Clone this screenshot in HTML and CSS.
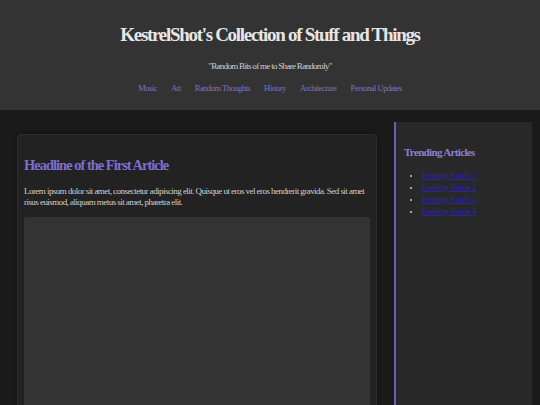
FILE: index.html
```html
<!DOCTYPE html>
<html lang="en">

<head>
    <meta charset="UTF-8">
    <meta name="viewport" content="width=device-width, initial-scale=1.0">
    <title>KestrelShot's Collection</title>
    <link rel="stylesheet" href="styles.css">
</head>

<body>
    <header>
        <h1>KestrelShot's Collection of Stuff and Things</h1>
        <p class="tagline">"Random Bits of me to Share Randomly"</p>
        <nav>
            <ul class="nav-link">
                <li><a href="#">Music</a></li>
                <li><a href="#">Art</a></li>
                <li><a href="#">Random Thoughts</a></li>
                <li><a href="#">History</a></li>
                <li><a href="#">Architecture</a></li>
                <li><a href="#">Personal Updates</a></li>
            </ul>
        </nav>
    </header>

    <main class="main-container">
        <article class="post">
            <h2 class="post-title">Headline of the First Article</h2>
            <p class="post-text">Lorem ipsum dolor sit amet, consectetur adipiscing elit. Quisque ut eros vel eros hendrerit gravida. Sed sit amet risus euismod, aliquam metus sit amet, pharetra elit.</p>
            <div class="post-image"></div>
        </article>

        <aside class="sidebar">
            <h3>Trending Articles</h3>
            <ul class="trending">
                <li><a href="#">Trending Article 1</a></li>
                <li><a href="#">Trending Article 2</a></li>
                <li><a href="#">Trending Article 3</a></li>
                <li><a href="#">Trending Article 4</a></li>
            </ul>
        </aside>
    </main>
</body>

</html>
```

FILE: styles.css
```css
* {
    padding: 0;
    margin: 0;
}

body {
    background-color: #1a1a1a;
    font-family: "Liberation Serif", serif;
    color: #cccccc;
}

header {
    background-color: #333333;
    height: 110px;
    display: flex;
    flex-direction: column;
    align-items: center;
    padding-top: 24px;
    box-sizing: border-box;
}

header h1 {
    font-size: 19px;
    letter-spacing: -1.3px;
    color: #e6e6e6;
    font-weight: bold;
}

.tagline {
    font-size: 9px;
    letter-spacing: -0.7px;
    margin-top: 15px;
    color: #d0d0d0;
}

.nav-link {
    list-style: none;
    display: flex;
    gap: 14px;
    margin-top: 6px;
}

.nav-link a {
    font-size: 8.5px;
    letter-spacing: -0.5px;
    color: #7d72c4;
    text-decoration: none;
}

.main-container {
    display: flex;
    align-items: flex-start;
    gap: 17px;
    padding: 12px 8px 0 17px;
}

.post {
    width: 360px;
    margin-top: 12px;
    height: 290px;
    background-color: #222222;
    border: 1px solid #2e2e2e;
    border-radius: 4px;
    padding: 22px 6px 0 6px;
    box-sizing: border-box;
    box-shadow: 0 0 4px rgba(0, 0, 0, 0.4);
}

.post-title {
    font-size: 14.5px;
    letter-spacing: -1px;
    color: #7b6fd0;
}

.post-text {
    font-size: 9px;
    letter-spacing: -0.55px;
    line-height: 11px;
    margin-top: 12px;
    color: #cfcfcf;
}

.post-image {
    background-color: #333333;
    border-radius: 3px;
    height: 200px;
    margin-top: 9px;
}

.sidebar {
    flex: 1;
    height: 290px;
    background-color: #282828;
    border-left: 2px solid #6a5fc0;
    padding: 24px 8px 0 8px;
}

.sidebar h3 {
    font-size: 11px;
    letter-spacing: -0.65px;
    color: #8a80d0;
}

.trending {
    margin-top: 12px;
    padding-left: 17px;
    font-size: 8px;
    letter-spacing: -0.2px;
    line-height: 12px;
}

.trending a {
    color: #2a22b8;
}
```
